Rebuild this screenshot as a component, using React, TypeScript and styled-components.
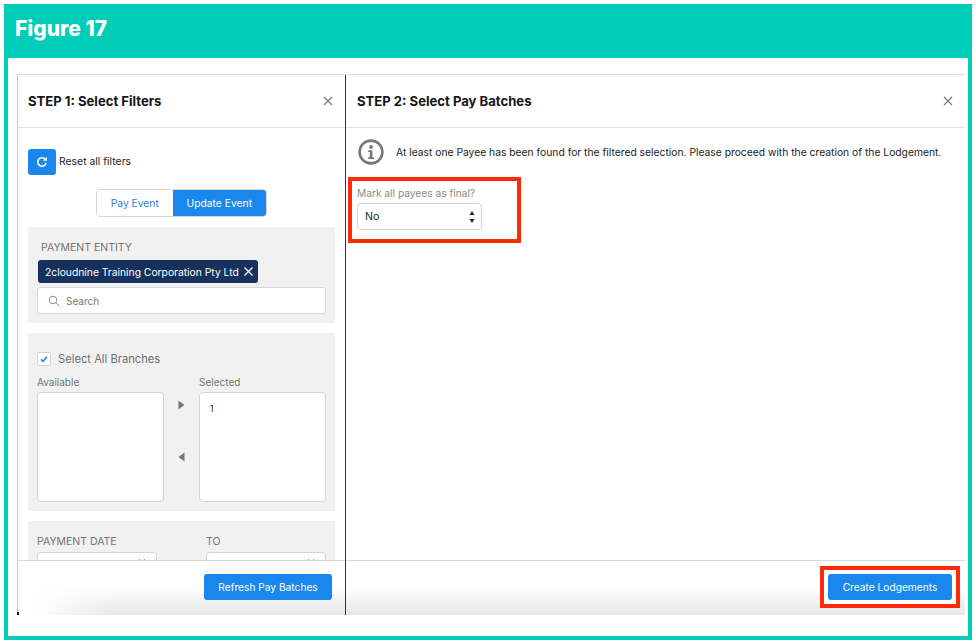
import { FunctionComponent, ReactNode } from "react";
import styled, { createGlobalStyle } from "styled-components";

const GlobalStyle = createGlobalStyle`
  html, body {
    margin: 0;
    padding: 0;
    background: #fff;
  }
  * {
    box-sizing: border-box;
  }
`;

const Page = styled.div`
  width: 976px;
  height: 644px;
  padding: 4px;
  font-family: Inter, "Liberation Sans", sans-serif;
  color: #111;
`;
const Figure = styled.div`
  width: 968px;
  height: 636px;
  border: 4px solid #00cdb9;
  border-top: 0;
  display: flex;
  flex-direction: column;
`;
const FigureHeader = styled.div`
  height: 54px;
  flex-shrink: 0;
  background: #00cdb9;
  margin: 0 -4px;
  padding: 13px 0 0 11px;
  color: #fff;
  font-family: Inter, sans-serif;
  font-size: 21px;
  font-weight: 800;
  line-height: 24px;
`;
const Shot = styled.div`
  position: relative;
  margin: 16px 3px 0 9px;
  height: 541px;
  display: flex;
  overflow: hidden;
  border-top: 1px solid #dedede;

  &::after {
    content: "";
    position: absolute;
    left: 0;
    bottom: 0;
    width: 2px;
    height: 3px;
    background: #111;
  }
`;
const Panel = styled.div<{ $side: "left" | "right" }>`
  display: flex;
  flex-direction: column;
  height: 100%;
  width: ${(p) => (p.$side === "left" ? "329px" : "619px")};
  flex-shrink: 0;
  border-left: ${(p) => (p.$side === "left" ? "1px solid #c9c9c9" : "0")};
  border-right: ${(p) => (p.$side === "left" ? "1px solid #333" : "0")};
`;
const PanelHeader = styled.div<{ $side: "left" | "right" }>`
  height: 53px;
  flex-shrink: 0;
  border-bottom: 1px solid #e2e2e2;
  display: flex;
  align-items: center;
  justify-content: space-between;
  padding: 0 ${(p) => (p.$side === "left" ? "11px 0 10px" : "11px 0 11px")};
`;
const PanelTitle = styled.div`
  font-size: 13.1px;
  font-weight: 700;
  color: #161616;
`;
const CloseButton = styled.div`
  width: 12px;
  height: 12px;
  display: flex;
  color: #777;
`;
const LeftBody = styled.div`
  flex: 1;
  min-height: 0;
  overflow: hidden;
  padding: 21px 10px 0;
`;
const ResetRow = styled.div`
  display: flex;
  align-items: center;
  gap: 3px;
  font-size: 10.4px;
  line-height: 24px;
  color: #222;
`;
const ResetButton = styled.div`
  width: 28px;
  height: 26px;
  border-radius: 3px;
  background: #1a87ec;
  display: flex;
  align-items: center;
  justify-content: center;
`;
const Toggle = styled.div`
  margin: 14px 0 10px 68px;
  width: 171px;
  height: 28px;
  display: flex;
  border: 1px solid #d8d8d8;
  border-radius: 4px;
  overflow: hidden;
  font-size: 10.3px;
`;
const ToggleItem = styled.div<{ $active?: boolean }>`
  width: ${(p) => (p.$active ? "94px" : "76px")};
  display: flex;
  align-items: center;
  justify-content: center;
  background: ${(p) => (p.$active ? "#1a87ec" : "#fff")};
  color: ${(p) => (p.$active ? "#fff" : "#2b7fd6")};
`;
const Section = styled.div<{ $height: number; $top: number }>`
  width: 307px;
  height: ${(p) => p.$height}px;
  flex-shrink: 0;
  background: #f1f1f1;
  padding: ${(p) => p.$top}px 9px 0;
  margin-bottom: 10px;
  color: #757575;
`;
const CapsLabel = styled.div<{ $indent?: number }>`
  font-size: 10.5px;
  line-height: 13px;
  padding-left: ${(p) => p.$indent ?? 0}px;
`;
const Chip = styled.div`
  margin: 6px 0 4px 1px;
  width: 220px;
  height: 23px;
  border-radius: 3px;
  background: #16325c;
  color: #fff;
  font-size: 10.3px;
  display: flex;
  align-items: center;
  justify-content: space-between;
  padding: 0 4px 0 7px;
  white-space: nowrap;
`;
const SearchBox = styled.div`
  height: 27px;
  background: #fff;
  border: 1px solid #d9d9d9;
  border-radius: 3px;
  display: flex;
  align-items: center;
  gap: 6px;
  padding: 0 10px;
  font-size: 10px;
  color: #777;
`;
const CheckRow = styled.div`
  display: flex;
  align-items: center;
  gap: 7px;
  font-size: 11.2px;
  color: #6f6f6f;
`;
const CheckBox = styled.div`
  width: 14px;
  height: 14px;
  background: #fff;
  border: 1px solid #d4d4d4;
  border-radius: 2px;
  display: flex;
  align-items: center;
  justify-content: center;
`;
const DualGrid = styled.div`
  margin-top: 10px;
  display: grid;
  grid-template-columns: 127px 35px 127px;
  grid-template-rows: 13px 110px;
  row-gap: 3px;
  font-size: 10px;
`;
const ListBox = styled.div`
  background: #fff;
  border: 1px solid #d4d4d4;
  border-radius: 4px;
  padding: 11px 10px;
  font-size: 8.5px;
  color: #222;
`;
const Arrows = styled.div`
  display: flex;
  flex-direction: column;
  align-items: center;
  gap: 42px;
  padding-top: 8px;
`;
const DateGrid = styled.div`
  display: grid;
  grid-template-columns: 120px 120px;
  column-gap: 49px;
  row-gap: 4px;
`;
const DateInput = styled.div`
  height: 27px;
  background: #fff;
  border: 1px solid #d4d4d4;
  border-radius: 4px;
  display: flex;
  justify-content: flex-end;
  padding: 5px 10px 0 0;
  color: #999;
`;
const Footer = styled.div<{ $side: "left" | "right" }>`
  height: 55px;
  flex-shrink: 0;
  border-top: 1px solid #d9d9d9;
  display: flex;
  justify-content: flex-end;
  align-items: flex-start;
  padding: ${(p) => (p.$side === "left" ? "13px 13px 0 0" : "5px 5px 0 0")};
  background: linear-gradient(
      to right,
      #fff ${(p) => (p.$side === "left" ? "5%" : "0%")},
      rgba(255, 255, 255, 0) ${(p) => (p.$side === "left" ? "30%" : "0%")}
    ),
    linear-gradient(to bottom, #fff 48%, #e6e6e6 100%);
`;
const BlueButton = styled.div<{ $width: number }>`
  width: ${(p) => p.$width}px;
  height: 26px;
  border-radius: 3px;
  background: #1a87ec;
  color: #fff;
  font-size: 10.2px;
  display: flex;
  align-items: center;
  justify-content: center;
`;
const RightBody = styled.div`
  flex: 1;
  min-height: 0;
  padding: 11px 0 0 2px;
`;
const Notice = styled.div`
  display: flex;
  align-items: center;
  gap: 12px;
  padding-left: 10px;
  font-size: 10.3px;
  color: #1c1c1c;
  white-space: nowrap;
`;
const RedBox = styled.div`
  margin-top: 12px;
  width: 173px;
  height: 66px;
  border: 4px solid #ff2a0a;
  padding: 5px 0 0 5px;
`;
const FieldLabel = styled.div`
  font-size: 10.2px;
  line-height: 14px;
  color: #8a8a8a;
`;
const SelectBox = styled.div`
  margin-top: 3px;
  width: 125px;
  height: 27px;
  border: 1px solid #d4d4d4;
  border-radius: 4px;
  background: #fff;
  display: flex;
  align-items: center;
  justify-content: space-between;
  padding: 0 5px 0 7px;
  font-size: 10.5px;
  color: #222;
`;
const RedFrame = styled.div`
  width: 140px;
  height: 42px;
  border: 4px solid #ff2a0a;
  padding: 4px;
  display: flex;
  background: #fff;
`;

const CloseIcon: FunctionComponent = () => (
  <CloseButton>
    <svg width="12" height="12" viewBox="0 0 12 12" fill="none">
      <path d="M2 2l8 8M10 2l-8 8" stroke="currentColor" strokeWidth="1.2" />
    </svg>
  </CloseButton>
);

const Header: FunctionComponent<{ side: "left" | "right"; children: ReactNode }> = ({
  side,
  children,
}) => (
  <PanelHeader $side={side}>
    <PanelTitle>{children}</PanelTitle>
    <CloseIcon />
  </PanelHeader>
);

const App: FunctionComponent = () => {
  return (
    <Page>
      <GlobalStyle />
      <Figure>
        <FigureHeader>Figure 17</FigureHeader>
        <Shot>
          <Panel $side="left">
            <Header side="left">STEP 1: Select Filters</Header>
            <LeftBody>
              <ResetRow>
                <ResetButton>
                  <svg width="14" height="14" viewBox="0 0 14 14" fill="none">
                    <path
                      d="M10.8 8.6A4.2 4.2 0 1 1 10 4"
                      stroke="#fff"
                      strokeWidth="1.6"
                      strokeLinecap="round"
                    />
                    <path d="M11.8 1.8v4h-4z" fill="#fff" />
                  </svg>
                </ResetButton>
                Reset all filters
              </ResetRow>
              <Toggle>
                <ToggleItem>Pay Event</ToggleItem>
                <ToggleItem $active>Update Event</ToggleItem>
              </Toggle>
              <Section $height={96} $top={14}>
                <CapsLabel $indent={4}>PAYMENT ENTITY</CapsLabel>
                <Chip>
                  2cloudnine Training Corporation Pty Ltd
                  <svg width="11" height="11" viewBox="0 0 11 11" fill="none">
                    <path d="M1.5 1.5l8 8M9.5 1.5l-8 8" stroke="#fff" strokeWidth="1.2" />
                  </svg>
                </Chip>
                <SearchBox>
                  <svg width="12" height="12" viewBox="0 0 12 12" fill="none">
                    <circle cx="5" cy="5" r="3.8" stroke="#8a8a8a" strokeWidth="1" />
                    <path d="M8 8l3.4 3.4" stroke="#8a8a8a" strokeWidth="1" />
                  </svg>
                  Search
                </SearchBox>
              </Section>
              <Section $height={178} $top={19}>
                <CheckRow>
                  <CheckBox>
                    <svg width="10" height="10" viewBox="0 0 10 10" fill="none">
                      <path d="M2 5.4l2 2 4-4.6" stroke="#1a87ec" strokeWidth="1.6" />
                    </svg>
                  </CheckBox>
                  Select All Branches
                </CheckRow>
                <DualGrid>
                  <div>Available</div>
                  <div />
                  <div>Selected</div>
                  <ListBox />
                  <Arrows>
                    <svg width="7" height="10" viewBox="0 0 7 10">
                      <path d="M0.5 0.5L6.5 5L0.5 9.5z" fill="#777" />
                    </svg>
                    <svg width="7" height="10" viewBox="0 0 7 10">
                      <path d="M6.5 0.5L0.5 5L6.5 9.5z" fill="#777" />
                    </svg>
                  </Arrows>
                  <ListBox>1</ListBox>
                </DualGrid>
              </Section>
              <Section $height={60} $top={14}>
                <DateGrid>
                  <CapsLabel>PAYMENT DATE</CapsLabel>
                  <CapsLabel>TO</CapsLabel>
                  <DateInput>
                    <svg width="8" height="5" viewBox="0 0 8 5" fill="none">
                      <path d="M1 1l3 3 3-3" stroke="currentColor" />
                    </svg>
                  </DateInput>
                  <DateInput>
                    <svg width="8" height="5" viewBox="0 0 8 5" fill="none">
                      <path d="M1 1l3 3 3-3" stroke="currentColor" />
                    </svg>
                  </DateInput>
                </DateGrid>
              </Section>
            </LeftBody>
            <Footer $side="left">
              <BlueButton $width={128}>Refresh Pay Batches</BlueButton>
            </Footer>
          </Panel>
          <Panel $side="right">
            <Header side="right">STEP 2: Select Pay Batches</Header>
            <RightBody>
              <Notice>
                <svg width="26" height="26" viewBox="0 0 26 26" fill="none">
                  <circle cx="13" cy="13" r="11.4" stroke="#777" strokeWidth="2.6" />
                  <circle cx="13" cy="8" r="1.9" fill="#777" />
                  <path d="M10.2 11.2h4.2v7h1.6v1.8H10.2v-1.8h1.6v-5.2h-1.6z" fill="#777" />
                </svg>
                At least one Payee has been found for the filtered selection. Please proceed with the creation of the Lodgement.
              </Notice>
              <RedBox>
                <FieldLabel>Mark all payees as final?</FieldLabel>
                <SelectBox>
                  No
                  <svg width="8" height="14" viewBox="0 0 8 14">
                    <path d="M4 1l2.5 4h-5zM4 13l2.5-4h-5z" fill="#222" />
                  </svg>
                </SelectBox>
              </RedBox>
            </RightBody>
            <Footer $side="right">
              <RedFrame>
                <BlueButton $width={124}>Create Lodgements</BlueButton>
              </RedFrame>
            </Footer>
          </Panel>
        </Shot>
      </Figure>
    </Page>
  );
};

export default App;
